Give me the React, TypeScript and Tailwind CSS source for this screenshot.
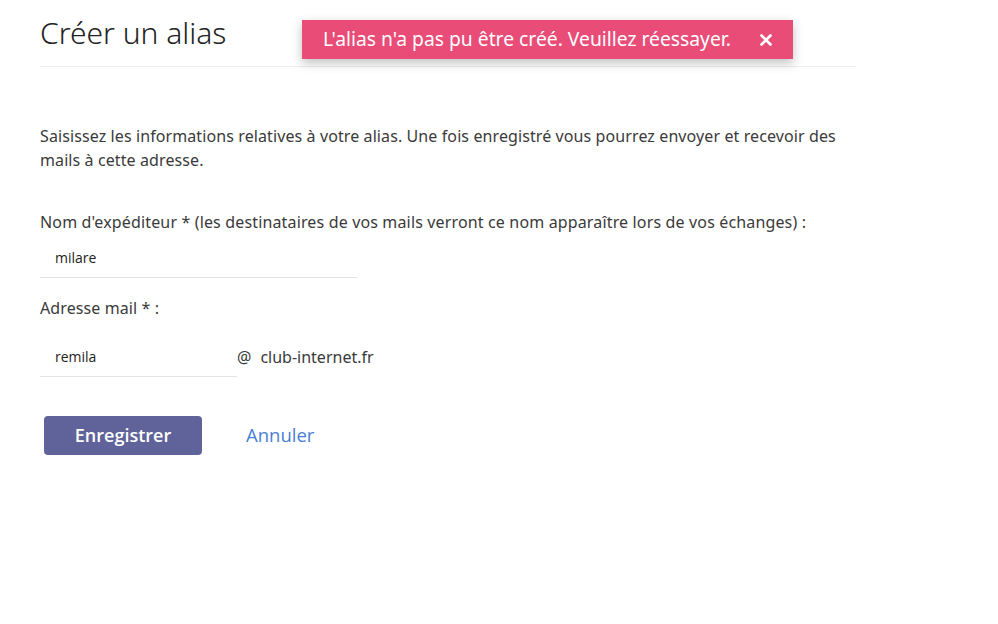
import React from 'react';
import { X } from 'lucide-react';

const App: React.FC = () => {
  return (
    <div className="relative min-h-[624px] w-[998px] bg-white font-['Noto_Sans',sans-serif] text-[#333]">
      <div className="w-[816px] ml-[40px] pt-[13px]">
        <h1 className="text-[30px] font-light leading-[40px] text-[#222] pb-[13px] border-b border-[#ececec]">
          Créer un alias
        </h1>

        <p className="mt-[57px] text-[16px] tracking-[0.1px] leading-[24px] text-[#3a3a3a]">
          Saisissez les informations relatives à votre alias. Une fois enregistré vous pourrez envoyer et recevoir des mails à cette adresse.
        </p>

        <div className="mt-[38px] text-[16px] tracking-[0.15px] leading-[24px] text-[#3a3a3a]">
          Nom d'expéditeur * (les destinataires de vos mails verront ce nom apparaître lors de vos échanges) :
        </div>
        <div className="w-[317px] mt-[14px] border-b border-[#e3e3e3] px-[15px] pb-[9px] font-['Open_Sans',sans-serif] text-[14px] leading-[20px] text-[#222]">
          milare
        </div>

        <div className="mt-[18px] text-[16px] tracking-[0.1px] leading-[24px] text-[#3a3a3a]">Adresse mail * :</div>
        <div className="mt-[27px] flex items-start">
          <div className="w-[197px] border-b border-[#e3e3e3] px-[15px] pb-[9px] font-['Open_Sans',sans-serif] text-[14px] leading-[20px] text-[#222]">
            remila
          </div>
          <div className="text-[16px] leading-[20px] text-[#3a3a3a]">
            <span className="mr-[9px]">@</span>club-internet.fr
          </div>
        </div>

        <div className="mt-[39px] flex items-center">
          <button className="ml-[4px] w-[158px] h-[39px] rounded-[4px] bg-[#5f6399] text-white font-['Open_Sans',sans-serif] font-semibold text-[18px]">
            Enregistrer
          </button>
          <button className="ml-[44px] -mt-[2px] text-[#4a7fd6] font-['Open_Sans',sans-serif] text-[18.5px]">Annuler</button>
        </div>
      </div>

      <div className="absolute left-[302px] top-[20px] w-[491px] h-[39px] bg-[#e84c77] shadow-[0_4px_10px_rgba(0,0,0,0.25)] flex items-center pl-[21px] pr-[18px] text-white text-[19.3px]">
        <span className="flex-1">L'alias n'a pas pu être créé. Veuillez réessayer.</span>
        <X className="w-[18px] h-[18px]" strokeWidth={3.5} />
      </div>
    </div>
  );
};

export default App;
